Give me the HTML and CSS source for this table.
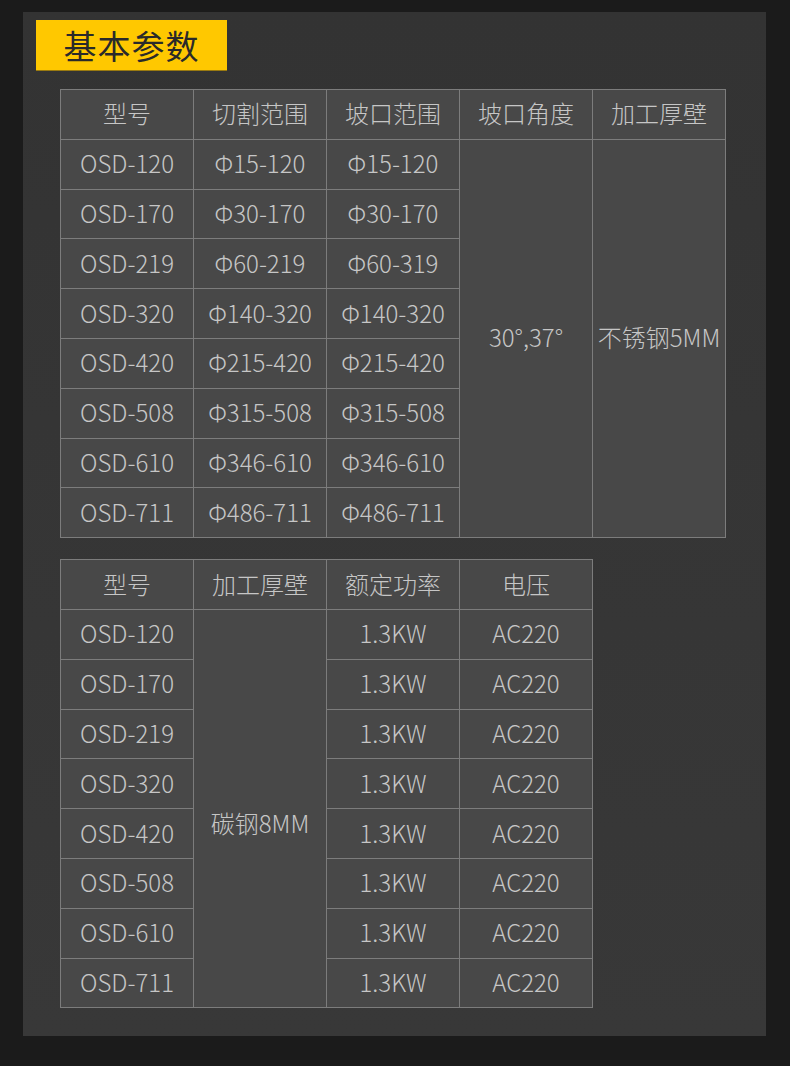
FILE: index.html
```html
<!DOCTYPE html>
<html lang="zh-CN">
<head>
<meta charset="utf-8">
<title>基本参数</title>
<link rel="stylesheet" href="styles.css">
</head>
<body>
<div class="panel">
  <div class="title">基本参数</div>
  <table class="spec spec-wide">
    <tr><th>型号</th><th>切割范围</th><th>坡口范围</th><th>坡口角度</th><th>加工厚壁</th></tr>
    <tr><td>OSD-120</td><td>Φ15-120</td><td>Φ15-120</td><td rowspan="8">30°,37°</td><td rowspan="8">不锈钢5MM</td></tr>
    <tr><td>OSD-170</td><td>Φ30-170</td><td>Φ30-170</td></tr>
    <tr><td>OSD-219</td><td>Φ60-219</td><td>Φ60-319</td></tr>
    <tr><td>OSD-320</td><td>Φ140-320</td><td>Φ140-320</td></tr>
    <tr><td>OSD-420</td><td>Φ215-420</td><td>Φ215-420</td></tr>
    <tr><td>OSD-508</td><td>Φ315-508</td><td>Φ315-508</td></tr>
    <tr><td>OSD-610</td><td>Φ346-610</td><td>Φ346-610</td></tr>
    <tr><td>OSD-711</td><td>Φ486-711</td><td>Φ486-711</td></tr>
  </table>
  <table class="spec spec-narrow">
    <tr><th>型号</th><th>加工厚壁</th><th>额定功率</th><th>电压</th></tr>
    <tr><td>OSD-120</td><td rowspan="8" class="low">碳钢8MM</td><td>1.3KW</td><td>AC220</td></tr>
    <tr><td>OSD-170</td><td>1.3KW</td><td>AC220</td></tr>
    <tr><td>OSD-219</td><td>1.3KW</td><td>AC220</td></tr>
    <tr><td>OSD-320</td><td>1.3KW</td><td>AC220</td></tr>
    <tr><td>OSD-420</td><td>1.3KW</td><td>AC220</td></tr>
    <tr><td>OSD-508</td><td>1.3KW</td><td>AC220</td></tr>
    <tr><td>OSD-610</td><td>1.3KW</td><td>AC220</td></tr>
    <tr><td>OSD-711</td><td>1.3KW</td><td>AC220</td></tr>
  </table>
</div>
</body>
</html>
```

FILE: styles.css
```css
html, body {
  margin: 0;
  padding: 0;
  background: #1b1b1b;
}
body {
  padding: 12px 24px 30px 23px;
  font-family: "Noto Sans CJK SC", "Noto Sans", sans-serif;
}
.panel {
  width: 743px;
  height: 1024px;
  box-sizing: border-box;
  background: linear-gradient(#333333, #383838);
  padding: 8px 0 0 13px;
}
.title {
  width: 191px;
  height: 51px;
  box-sizing: border-box;
  background: #ffc800;
  border-bottom: 1px solid #9a7a10;
  color: #2a2a2a;
  font-size: 33px;
  line-height: 50px;
  text-align: center;
  letter-spacing: 1px;
}
.spec {
  border-collapse: collapse;
  margin-left: 24px;
  table-layout: fixed;
  background: #484848;
}
.spec-wide {
  margin-top: 18px;
  width: 666px;
}
.spec-narrow {
  margin-top: 21px;
  width: 533px;
}
.spec th, .spec td {
  border: 1px solid #7c7c7c;
  height: 45.8px;
  padding: 0 0 3px 0;
  text-align: center;
  vertical-align: middle;
  color: #c6c6c6;
  font-size: 24px;
  font-weight: 300;
  white-space: nowrap;
}
.spec td.low {
  padding-top: 30px;
}
```
